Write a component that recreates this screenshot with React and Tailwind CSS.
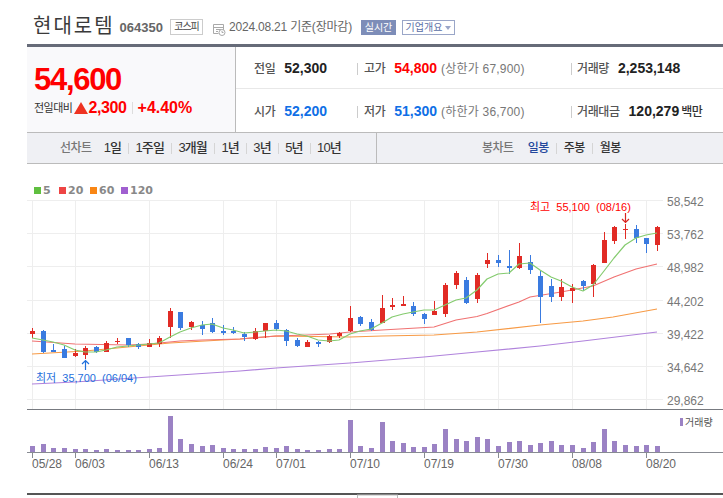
const FONT = "font-['Liberation_Sans','Noto_Sans_CJK_KR',sans-serif]";

// [x, wickTop, wickBottom, bodyTop, bodyBottom, up]
const CANDLES = [
  [32, 328, 338, 331, 334, 1], [43, 330, 353, 331, 352, 0], [53, 344, 352, 350, 352, 0], [64, 346, 358, 349, 358, 0],
  [75, 349, 357, 353, 356, 1], [85, 346, 359, 348, 355, 1], [96, 346, 353, 347, 352, 0], [106, 341, 352, 343, 352, 1],
  [117, 338, 344, 341, 342, 1], [128, 338, 347, 338, 345, 0], [138, 343, 349, 344, 347, 0], [149, 339, 347, 343, 347, 1],
  [159, 336, 347, 338, 344, 1], [170, 308, 338, 311, 327, 1], [180, 312, 330, 312, 328, 0], [191, 321, 330, 322, 327, 1],
  [202, 321, 335, 325, 329, 0], [212, 318, 333, 323, 332, 0], [223, 325, 335, 331, 333, 0], [233, 327, 334, 331, 333, 0],
  [244, 332, 341, 334, 337, 0], [255, 328, 340, 331, 339, 1], [265, 323, 338, 323, 331, 1], [276, 320, 331, 323, 329, 0],
  [286, 329, 346, 330, 341, 0], [297, 338, 347, 340, 346, 0], [307, 340, 347, 342, 347, 1], [318, 341, 347, 342, 344, 0],
  [329, 335, 343, 336, 342, 1], [339, 332, 338, 333, 336, 1], [350, 306, 332, 318, 331, 1], [360, 316, 326, 317, 324, 0],
  [371, 319, 331, 322, 330, 0], [382, 295, 323, 308, 323, 1], [392, 298, 310, 305, 307, 1], [403, 296, 306, 304, 306, 1],
  [413, 302, 316, 306, 314, 0], [424, 313, 324, 314, 319, 0], [434, 301, 315, 311, 315, 1], [445, 283, 317, 285, 314, 1],
  [456, 271, 289, 273, 285, 1], [466, 277, 304, 280, 303, 0], [477, 273, 303, 275, 299, 1], [487, 253, 268, 260, 264, 1],
  [498, 255, 267, 260, 263, 0], [509, 250, 274, 266, 268, 0], [519, 243, 269, 256, 268, 1], [530, 255, 274, 262, 270, 0],
  [540, 271, 323, 276, 297, 0], [551, 279, 302, 286, 297, 0], [561, 279, 301, 287, 297, 1], [572, 284, 303, 288, 291, 1],
  [583, 280, 291, 281, 286, 0], [593, 264, 297, 265, 284, 1], [604, 232, 263, 240, 263, 1], [614, 226, 244, 227, 241, 1],
  [625, 224, 239, 229, 230, 1], [636, 225, 243, 229, 238, 0], [646, 238, 253, 238, 244, 0], [657, 226, 251, 227, 245, 1]
];

const VOLUMES = [
  6, 8, 4, 4, 3, 3, 2, 3, 2, 2, 2, 3, 4, 36, 13, 8, 6, 7, 4, 3, 3, 3, 5, 4, 6, 3, 2, 2, 3, 3, 32, 6,
  4, 30, 11, 9, 5, 5, 8, 23, 13, 11, 15, 13, 6, 10, 11, 7, 9, 11, 7, 7, 4, 10, 23, 11, 7, 6, 7, 6
];

const MA5 = "32,338 43,340 53,342 64,345 75,350 85,352 96,352 106,350 117,347 128,346 138,345 149,344 159,343 170,337 180,332 191,328 202,325 212,324 223,328 233,330 244,333 255,332 265,331 276,330 286,331 297,334 307,336 318,340 329,341 339,340 350,334 360,331 371,329 382,323 392,317 403,314 413,312 424,310 434,310 445,305 456,300 466,298 477,290 487,279 498,274 509,273 519,264 530,263 540,270 551,277 561,281 572,287 583,291 593,285 604,271 614,258 625,245 636,238 646,235 657,233";
const MA20 = "32,341 75,344 128,345 149,344 180,341 202,340 240,339 276,336 307,335 330,334 350,332 382,330 434,327 456,320 477,316.5 487,313.5 519,302 530,297 561,292 593,286 614,277 636,269 657,264";
const MA60 = "32,354 85,351 149,345 170,343 240,339 276,336 350,337 382,336 434,335 477,332 540,325 583,321 613,317 657,309";
const MA120 = "32,384 75,382 149,377 240,371 276,368 350,363 424,357 477,352 540,346 583,341 657,332";

const H_GRID = [200, 233, 266, 300, 333, 366, 399];
const V_GRID = [32, 75, 149, 223, 276, 350, 424, 498, 572, 646];
const PRICES = ["58,542", "53,762", "48,982", "44,202", "39,422", "34,642", "29,862"];
const DATES = ["05/28", "06/03", "06/13", "06/24", "07/01", "07/10", "07/19", "07/30", "08/08", "08/20"];
const LEGEND = [
  { x: 34, color: "#5fbf3f", label: "5" },
  { x: 59, color: "#ee4444", label: "20" },
  { x: 90, color: "#f98614", label: "60" },
  { x: 121, color: "#a05fd0", label: "120" }
];

function Chart() {
  return (
    <svg width="723" height="334" viewBox="0 164 723 334" className="block">
      {LEGEND.map((l) => (
        <g key={l.label}>
          <rect x={l.x} y={187} width="7" height="7" fill={l.color} />
          <text x={l.x + 9} y={194} fontSize="11" fontWeight="700" fill="#888" fontFamily="DejaVu Sans, sans-serif">{l.label}</text>
        </g>
      ))}

      {H_GRID.map((y) => <line key={y} x1="27" x2="663" y1={y + 0.5} y2={y + 0.5} stroke="#eeeeee" />)}
      {V_GRID.map((x) => <line key={x} x1={x + 0.5} x2={x + 0.5} y1="200" y2="409" stroke="#eeeeee" />)}
      {PRICES.map((p, i) => (
        <text key={p} x="667" y={H_GRID[i] + 6} fontSize="12" fill="#777" fontFamily="Liberation Sans, sans-serif">{p}</text>
      ))}

      <polyline points={MA120} fill="none" stroke="#b083dc" strokeWidth="1.2" />
      <polyline points={MA60} fill="none" stroke="#f79a45" strokeWidth="1.2" />
      <polyline points={MA20} fill="none" stroke="#f07272" strokeWidth="1.2" />

      {CANDLES.map(([x, wt, wb, bt, bb, up]) => (
        <g key={x} fill={up ? "#e12b25" : "#3a7be0"}>
          <rect x={x} y={wt} width="1" height={wb - wt} />
          <rect x={x - 2} y={bt} width="5" height={bb - bt} />
        </g>
      ))}

      <polyline points={MA5} fill="none" stroke="#84cb6e" strokeWidth="1.2" strokeLinejoin="round" />

      <text x="530" y="211" fontSize="11" wordSpacing="3" fill="#ff0000" fontFamily="Liberation Sans, Noto Sans CJK KR, sans-serif">최고 55,100 (08/16)</text>
      <path d="M625.5 213v9M622 219l3.5 3.5 3.5-3.5" fill="none" stroke="#d9231f" strokeWidth="1.2" />
      <text x="36" y="382" fontSize="11" wordSpacing="3" fill="#1f6fdc" fontFamily="Liberation Sans, Noto Sans CJK KR, sans-serif">최저 35,700 (06/04)</text>
      <path d="M85.5 370v-9M82 364l3.5-3.5 3.5 3.5" fill="none" stroke="#1f6fdc" strokeWidth="1.2" />

      {/* volume pane */}
      <rect x="27" y="409" width="696" height="1" fill="#777a80" />
      {VOLUMES.map((v, i) => (
        <rect key={i} x={CANDLES[i][0] - 2} y={452 - v} width="5" height={v} fill="#9b82c4" />
      ))}
      <rect x="27" y="452" width="696" height="1" fill="#888b92" />
      {V_GRID.map((x) => <rect key={x} x={x} y="453" width="1" height="5" fill="#888b92" />)}
      {DATES.map((d, i) => (
        <text key={d} x={V_GRID[i]} y="468" fontSize="12" fill="#666" fontFamily="Liberation Sans, sans-serif">{d}</text>
      ))}
      <rect x="680" y="418" width="3" height="8" fill="#9b82c4" />
      <text x="685" y="426" fontSize="10" fill="#555" fontFamily="Noto Sans CJK KR, sans-serif">거래량</text>

      <rect x="27" y="493" width="696" height="2" fill="#555555" />
      <rect x="357.5" y="495" width="40" height="6" fill="#fff" stroke="#bbbbbb" />
    </svg>
  );
}

function Stat({ label, children, className }) {
  return (
    <div className={`flex items-center ${className}`}>
      <span className="text-[12px] tracking-[-0.4px] font-medium text-[#555]">{label}</span>
      {children}
    </div>
  );
}

function Divider() {
  return <span className="h-3 w-px bg-[#cccccc]" />;
}

export default function App() {
  return (
    <div className={`${FONT} w-[723px] h-[498px] overflow-hidden bg-white`}>
      {/* Title */}
      <div className="h-[44px] pl-[33px] pt-[13px] flex items-start">
        <h1 className="text-[20px] leading-[26px] tracking-[2px] text-[#3a3a3a] font-normal">현대로템</h1>
        <span className="ml-[5px] mt-[7px] text-[13px] leading-4 font-bold text-[#666]">064350</span>
        <span className="ml-[7px] mt-[6px] w-[33px] h-[16px] border border-[#cccccc] text-[10px] leading-[14px] text-center tracking-[-1px] text-[#444]">코스피</span>
        <svg width="13" height="13" viewBox="0 0 13 13" className="ml-[10px] mt-[10px]" fill="none" stroke="#a9a9a9">
          <path d="M.5 1.5h10v6M.5 1.5v9h5M.5 4.5h10M3 6.5h5M3 8.5h2" />
          <circle cx="9" cy="9.5" r="3" fill="#fff" />
          <path d="M9 8v1.5h1.5" />
        </svg>
        <span className="ml-[3px] mt-[6px] text-[12px] leading-4 tracking-[-0.2px] text-[#666]">2024.08.21 기준(장마감)</span>
        <span className="ml-[9px] mt-[7px] w-[35px] h-[15px] bg-[#7d8db8] text-white text-[10px] leading-[15px] text-center">실시간</span>
        <span className="ml-[6px] mt-[7px] w-[53px] h-[15px] border border-[#9aa6c8] text-[#5a6ea5] text-[10px] leading-[13px] flex items-center justify-center gap-[3px]">
          기업개요
          <span className="w-0 h-0 border-x-[3px] border-x-transparent border-t-[4px] border-t-[#9aa6c8]" />
        </span>
      </div>

      <div className="ml-[27px] h-[3px] bg-[#666b78]" />

      {/* Quote */}
      <div className="ml-[27px] h-[85px] flex">
        <div className="w-[209px] shrink-0 bg-[#f9f9fb] border-r border-[#bbbbbb] pl-[7px] pt-[15px]">
          <div className="text-[31px] leading-[36px] font-bold tracking-[-1.3px] text-[#ff0000]">54,600</div>
          <div className="mt-[1px] flex items-center h-[18px]">
            <span className="text-[11px] text-[#333] tracking-[-0.5px]">전일대비</span>
            <span className="ml-[2px] w-0 h-0 border-x-[7px] border-x-transparent border-b-[12px] border-b-[#ee3322]" />
            <span className="text-[16px] font-bold text-[#ff0000] tracking-[-0.4px]">2,300</span>
            <span className="mx-[5px] h-3 w-px bg-[#dddddd]" />
            <span className="text-[16px] font-bold text-[#ff0000]">+4.40%</span>
          </div>
        </div>
        <div className="flex-1 flex flex-col">
          <div className="h-[42px] pt-[2px] border-b border-[#e8e8e8] flex items-center">
            <Stat label="전일" className="w-[121px] pl-[18px] shrink-0">
              <b className="ml-[9px] text-[14px] text-[#222]">52,300</b>
            </Stat>
            <Divider />
            <Stat label="고가" className="w-[213px] pl-[6px] shrink-0">
              <b className="ml-[9px] text-[14px] text-[#ff0000]">54,800</b>
              <span className="ml-[4px] text-[12px] tracking-[0.2px] text-[#777]">(상한가 67,900)</span>
            </Stat>
            <Divider />
            <Stat label="거래량" className="pl-[5px]">
              <b className="ml-[9px] text-[14px] text-[#222]">2,253,148</b>
            </Stat>
          </div>
          <div className="flex-1 pt-[2px] flex items-center">
            <Stat label="시가" className="w-[121px] pl-[18px] shrink-0">
              <b className="ml-[9px] text-[14px] text-[#0f6fe6]">52,200</b>
            </Stat>
            <Divider />
            <Stat label="저가" className="w-[213px] pl-[6px] shrink-0">
              <b className="ml-[9px] text-[14px] text-[#0f6fe6]">51,300</b>
              <span className="ml-[4px] text-[12px] tracking-[0.2px] text-[#777]">(하한가 36,700)</span>
            </Stat>
            <Divider />
            <Stat label="거래대금" className="pl-[5px]">
              <b className="ml-[9px] text-[14px] text-[#222]">120,279</b>
              <span className="ml-[2px] text-[12px] tracking-[-0.4px] font-medium text-[#333]">백만</span>
            </Stat>
          </div>
        </div>
      </div>

      {/* Period tabs */}
      <div className="ml-[27px] h-[32px] flex bg-[#eff0f4] border-y border-[#bbbbbb] text-[13px] font-medium text-[#333]">
        <div className="w-[350px] border-r border-[#bbbbbb] pl-[33px] flex items-center">
          <span className="mr-[12px] text-[12px] tracking-[-0.5px] text-[#777]">선차트</span>
          {["1일", "1주일", "3개월", "1년", "3년", "5년", "10년"].map((t, i) => (
            <span key={t} className="flex items-center tracking-[-0.9px]">
              {i > 0 && <span className="ml-[7px] mr-[6.5px] h-[11px] w-px bg-[#d5d5d5]" />}
              {t}
            </span>
          ))}
        </div>
        <div className="flex-1 pl-[105px] flex items-center text-[12px] tracking-[-0.5px]">
          <span className="mr-[14px] text-[#777]">봉차트</span>
          <span className="text-[#23479c]">일봉</span>
          <span className="mx-[7px] h-[11px] w-px bg-[#d5d5d5]" />
          <span>주봉</span>
          <span className="mx-[7px] h-[11px] w-px bg-[#d5d5d5]" />
          <span>월봉</span>
        </div>
      </div>

      <Chart />
    </div>
  );
}
